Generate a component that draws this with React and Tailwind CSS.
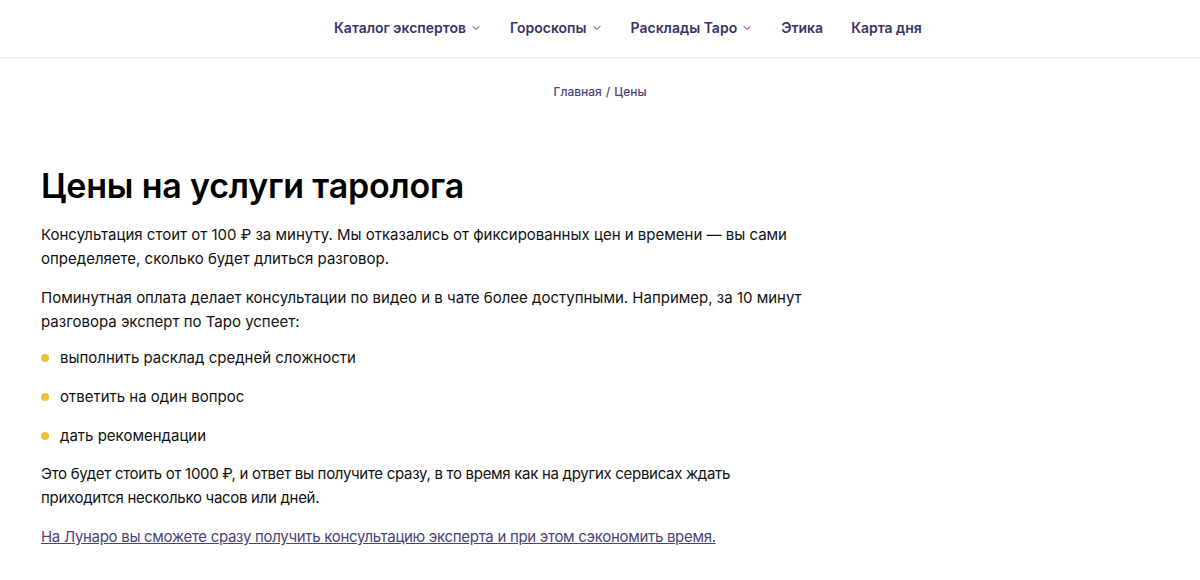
import { FiChevronDown } from "react-icons/fi"

const navItems = [
  { label: "Каталог экспертов", dropdown: true },
  { label: "Гороскопы", dropdown: true },
  { label: "Расклады Таро", dropdown: true },
  { label: "Этика" },
  { label: "Карта дня" },
]

const bullets = ["выполнить расклад средней сложности", "ответить на один вопрос", "дать рекомендации"]

export default function App() {
  return (
    <div className="min-h-[580px] bg-white text-[#111] font-['Inter',sans-serif]">
      <header className="h-[59px] border-b-2 border-[#f2f1f8] flex items-center pl-[334px] pb-[2px]">
        <nav className="flex items-center gap-[28px]">
          {navItems.map((item) => (
            <a key={item.label} href="#" className="flex items-center gap-1 text-[14px] font-semibold text-[#3a3468]">
              {item.label}
              {item.dropdown && <FiChevronDown className="w-3 h-3 mt-[1px] text-[#3a3468]" />}
            </a>
          ))}
        </nav>
      </header>

      <div className="pt-[24px] flex justify-center text-[12px] font-medium text-[#4b4479]">
        <a href="#">Главная</a>
        <span className="mx-1">/</span>
        <span>Цены</span>
      </div>

      <main className="pl-[41px] pt-[65px] w-[803px]">
        <h1 className="text-[34px] leading-[40px] font-semibold tracking-[-0.2px] text-black">Цены на услуги таролога</h1>

        <div className="mt-[17px] text-[15px] leading-[24px]">
          <p>
            Консультация стоит от 100 ₽ за минуту. Мы отказались от фиксированных цен и времени — вы сами определяете,
            сколько будет длиться разговор.
          </p>
          <p className="mt-[15px]">
            Поминутная оплата делает консультации по видео и в чате более доступными. Например, за 10 минут разговора
            эксперт по Таро успеет:
          </p>
          <ul className="mt-[12px] space-y-[15px]">
            {bullets.map((b) => (
              <li key={b} className="flex items-center">
                <span className="w-[8px] h-[8px] rounded-full bg-[#e9c23c] mr-[11px]" />
                {b}
              </li>
            ))}
          </ul>
          <p className="mt-[14px] tracking-[-0.3px]">
            Это будет стоить от 1000 ₽, и ответ вы получите сразу, в то время как на других сервисах ждать приходится
            несколько часов или дней.
          </p>
          <p className="mt-[15px]">
            <a href="#" className="underline text-[#4b4479] tracking-[-0.3px]">
              На Лунаро вы сможете сразу получить консультацию эксперта и при этом сэкономить время.
            </a>
          </p>
        </div>
      </main>
    </div>
  )
}
